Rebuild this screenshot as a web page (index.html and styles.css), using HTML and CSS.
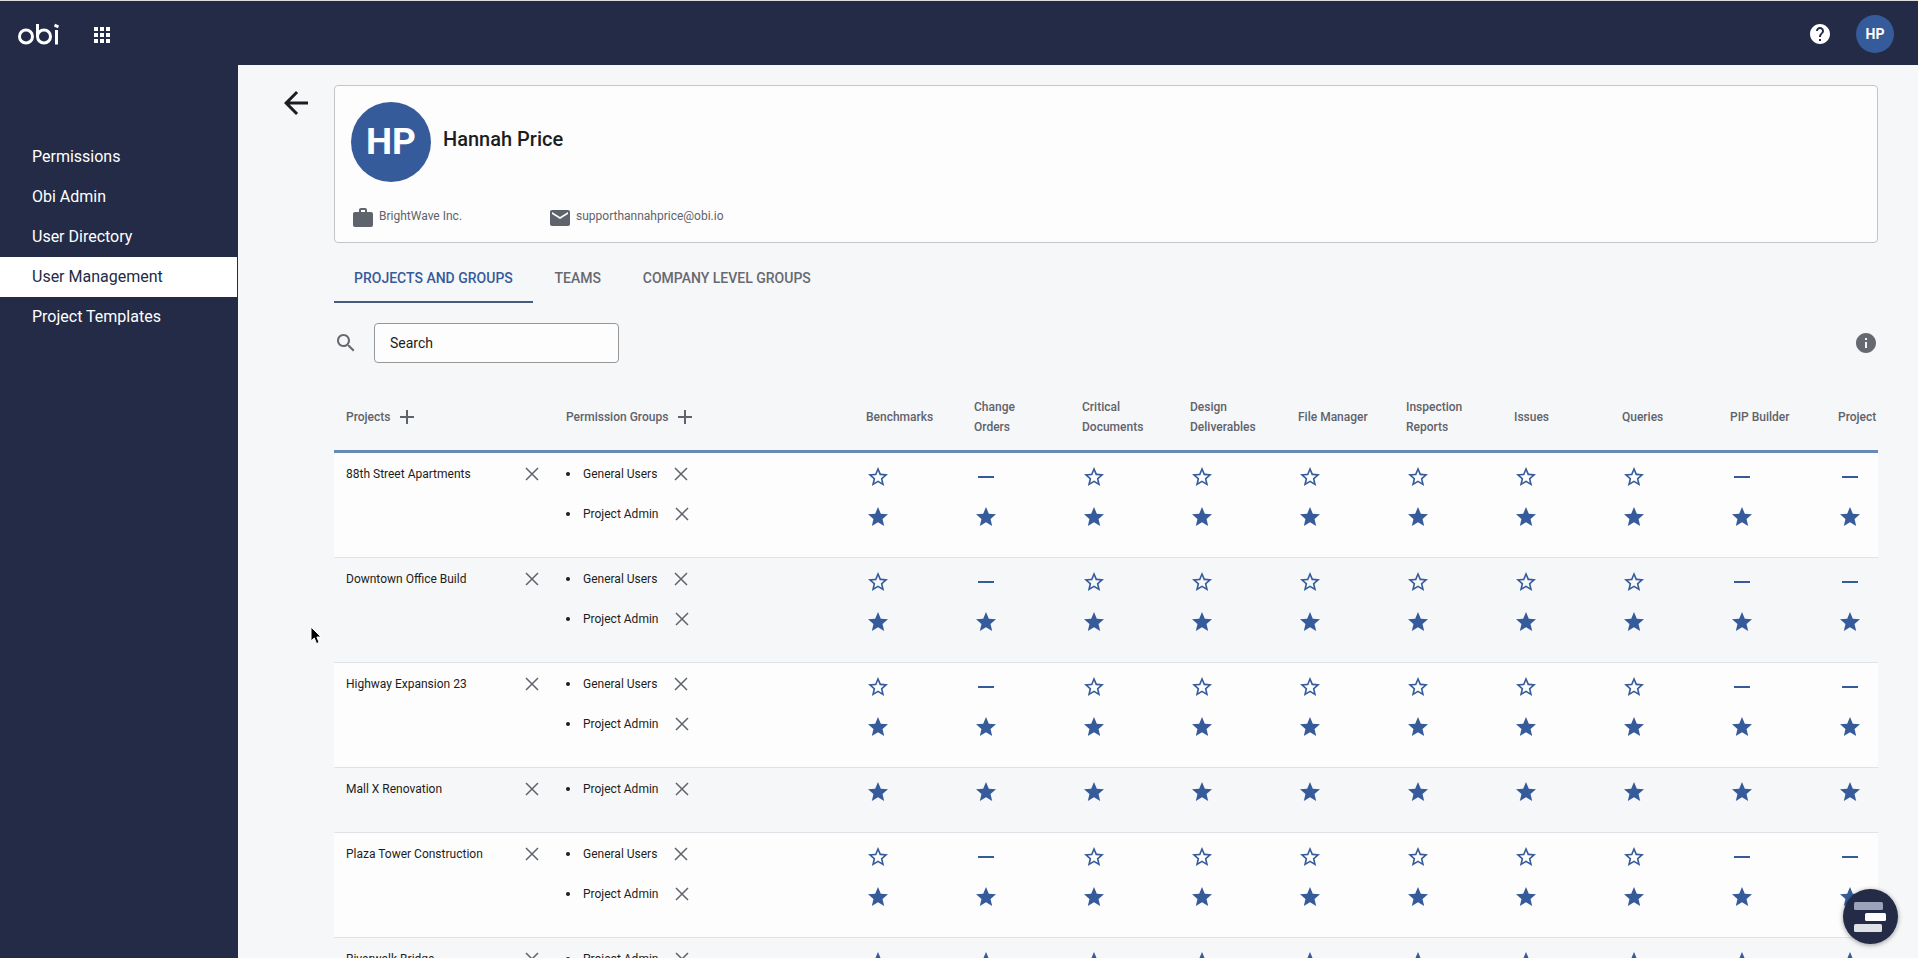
FILE: index.html
```html
<!DOCTYPE html>
<html lang="en">
<head>
    <meta charset="utf-8">
    <title>Obi - User Management</title>
    <meta name="viewport" content="width=device-width, initial-scale=1.0">
    <link rel="stylesheet" href="styles.css">
</head>
<body>
    <!-- icon sprites -->
    <svg class="sprites" aria-hidden="true">
        <symbol id="star" viewBox="0 0 24 24"><path d="M12 17.27 18.18 21l-1.64-7.03L22 9.24l-7.19-.61L12 2 9.19 8.63 2 9.24l5.46 4.73L5.82 21z"/></symbol>
        <symbol id="star-empty" viewBox="0 0 24 24"><path d="M22 9.24l-7.19-.62L12 2 9.19 8.63 2 9.24l5.46 4.73L5.82 21 12 17.27 18.18 21l-1.63-7.03L22 9.24zM12 15.4l-3.76 2.27 1-4.28-3.32-2.88 4.38-.38L12 6.1l1.71 4.04 4.38.38-3.32 2.88 1 4.28L12 15.4z"/></symbol>
        <symbol id="dash" viewBox="0 0 24 24"><path d="M4 11h16v2H4z"/></symbol>
        <symbol id="close" viewBox="0 0 24 24"><path d="M6 6l12 12M18 6 6 18" fill="none" stroke="currentColor" stroke-width="1.5"/></symbol>
        <symbol id="plus" viewBox="0 0 24 24"><path d="M19 13h-6v6h-2v-6H5v-2h6V5h2v6h6v2z"/></symbol>
    </svg>

    <header class="topbar">
        <a href="#" class="logo" aria-label="obi">
            <svg width="42" height="24" viewBox="0 0 42 24" stroke="#fff" stroke-width="3">
                <circle cx="9" cy="13.500" r="6.500"/>
                <path d="M20.500 1v12.500"/>
                <circle cx="27" cy="13.500" r="6.500"/>
                <path d="M39.500 7v14.500"/>
                <path d="M37.500 2.200l4 1.600"/>
            </svg>
        </a>
        <button class="icon-btn" aria-label="Apps">
            <svg width="24" height="24" viewBox="0 0 24 24"><path d="M4 8h4V4H4v4zm6 12h4v-4h-4v4zm-6 0h4v-4H4v4zm0-6h4v-4H4v4zm6 0h4v-4h-4v4zm6-10v4h4V4h-4zm-6 4h4V4h-4v4zm6 6h4v-4h-4v4zm0 6h4v-4h-4v4z"/></svg>
        </button>
        <div class="topbar-right">
            <button class="icon-btn" aria-label="Help">
                <svg width="24" height="24" viewBox="0 0 24 24"><path d="M12 2C6.480 2 2 6.480 2 12s4.480 10 10 10 10-4.480 10-10S17.520 2 12 2zm1 17h-2v-2h2v2zm2.070-7.750l-.9.920C13.450 12.900 13 13.500 13 15h-2v-.5c0-1.100.450-2.100 1.170-2.830l1.240-1.260c.370-.360.590-.860.590-1.410 0-1.100-.9-2-2-2s-2 .9-2 2H8c0-2.210 1.790-4 4-4s4 1.790 4 4c0 .880-.360 1.680-.930 2.250z"/></svg>
            </button>
            <button class="avatar avatar-small">HP</button>
        </div>
    </header>

    <div class="layout">
        <nav class="sidebar">
            <a href="#">Permissions</a>
            <a href="#">Obi Admin</a>
            <a href="#">User Directory</a>
            <a href="#" class="active">User Management</a>
            <a href="#">Project Templates</a>
        </nav>

        <main class="main">
            <button class="back-btn" aria-label="Back">
                <svg width="36" height="36" viewBox="0 0 24 24"><path d="M20 11H7.830l5.590-5.590L12 4l-8 8 8 8 1.410-1.410L7.830 13H20v-2z"/></svg>
            </button>

            <div class="content">
                <section class="card">
                    <div class="person">
                        <div class="avatar avatar-big">HP</div>
                        <h1>Hannah Price</h1>
                    </div>
                    <div class="details">
                        <div class="detail">
                            <svg width="24" height="24" viewBox="0 0 24 24"><path d="M20 6h-4V4c0-1.110-.890-2-2-2h-4c-1.110 0-2 .890-2 2v2H4c-1.110 0-2 .890-2 2v11c0 1.110.890 2 2 2h16c1.110 0 2-.890 2-2V8c0-1.110-.890-2-2-2zm-6 0h-4V4h4v2z"/></svg>
                            <span>BrightWave Inc.</span>
                        </div>
                        <div class="detail">
                            <svg width="24" height="24" viewBox="0 0 24 24"><path d="M20 4H4c-1.100 0-2 .9-2 2v12c0 1.100.9 2 2 2h16c1.100 0 2-.9 2-2V6c0-1.100-.9-2-2-2zm0 4l-8 5-8-5V6l8 5 8-5v2z"/></svg>
                            <span>supporthannahprice@obi.io</span>
                        </div>
                    </div>
                </section>

                <div class="tabs" role="tablist">
                    <button class="tab selected" role="tab" aria-selected="true">PROJECTS AND GROUPS</button>
                    <button class="tab" role="tab">TEAMS</button>
                    <button class="tab" role="tab">COMPANY LEVEL GROUPS</button>
                </div>

                <div class="search-row">
                    <label for="search" aria-label="Search">
                        <svg width="24" height="24" viewBox="0 0 24 24"><path d="M15.500 14h-.790l-.280-.270C15.410 12.590 16 11.110 16 9.500 16 5.910 13.090 3 9.500 3S3 5.910 3 9.500 5.910 16 9.500 16c1.610 0 3.090-.590 4.230-1.570l.270.280v.790l5 4.990L20.490 19l-4.990-5zm-6 0C7.010 14 5 11.990 5 9.500S7.010 5 9.500 5 14 7.010 14 9.500 11.990 14 9.500 14z"/></svg>
                    </label>
                    <input type="text" id="search" placeholder="Search">
                    <button class="info-btn" aria-label="Info">
                        <svg width="24" height="24" viewBox="0 0 24 24"><path d="M12 2C6.480 2 2 6.480 2 12s4.480 10 10 10 10-4.480 10-10S17.520 2 12 2zm1 15h-2v-6h2v6zm0-8h-2V7h2v2z"/></svg>
                    </button>
                </div>

                <div class="table-wrap">
                    <table>
                        <thead>
                            <tr>
                                <th class="col-project"><span class="head">Projects <button aria-label="Add project"><svg width="24" height="24"><use href="#plus"/></svg></button></span></th>
                                <th class="col-groups"><span class="head">Permission Groups <button aria-label="Add group"><svg width="24" height="24"><use href="#plus"/></svg></button></span></th>
                                <th>Benchmarks</th>
                                <th>Change<br>Orders</th>
                                <th>Critical<br>Documents</th>
                                <th>Design<br>Deliverables</th>
                                <th>File Manager</th>
                                <th>Inspection<br>Reports</th>
                                <th>Issues</th>
                                <th>Queries</th>
                                <th>PIP Builder</th>
                                <th>Project</th>
                            </tr>
                        </thead>
                        <tbody id="rows"></tbody>
                    </table>
                </div>
            </div>
        </main>
    </div>

    <button class="chat-btn" aria-label="Open widget">
        <svg width="55" height="55" viewBox="0 0 55 55">
            <rect x="11" y="13" width="29" height="8" rx="1.500" fill="#9aa3b9"/>
            <rect x="22" y="24" width="21" height="8" rx="1.500" fill="#fff"/>
            <rect x="11" y="35" width="28" height="8" rx="1.500" fill="#dfe1e6"/>
        </svg>
    </button>

    <svg class="cursor" width="14" height="20" viewBox="0 0 14 20"><path d="M1 1v14l3.300-3 2.200 5.500 2.600-1L6.900 11H11z" fill="#000" stroke="#fff"/></svg>

    <script src="script.js"></script>
</body>
</html>
```
FILE: styles.css
```css
* {
    box-sizing: border-box;
}
body {
    margin: 0;
    height: 100vh;
    display: flex;
    flex-direction: column;
    overflow: hidden;
    font-family: Roboto, sans-serif;
    font-size: 12px;
    line-height: 20px;
    color: #1c1d21;
    background-color: #f6f7f9;
}
button {
    font-family: inherit;
    padding: 0;
    border: none;
    background: none;
    color: inherit;
    cursor: pointer;
}
svg {
    display: block;
    fill: currentColor;
}
.sprites {
    position: absolute;
    width: 0;
    height: 0;
}

/* top bar */
.topbar {
    flex: none;
    display: flex;
    align-items: center;
    height: 65px;
    padding: 4px 24px 0 17px;
    border-top: 1px solid #dcdedd;
    background-color: #232b47;
    color: #fff;
}
.logo {
    margin-right: 31px;
}
.logo svg {
    fill: none;
}
.topbar-right {
    display: flex;
    align-items: center;
    gap: 24px;
    margin-left: auto;
    padding-bottom: 2px;
}
.avatar {
    display: flex;
    align-items: center;
    justify-content: center;
    border-radius: 50%;
    background-color: #365b9a;
    color: #fff;
    font-weight: 700;
}
.avatar-small {
    width: 38px;
    height: 38px;
    font-size: 14px;
}
.avatar-big {
    width: 80px;
    height: 80px;
    font-size: 37px;
}

/* sidebar */
.layout {
    flex: 1;
    display: flex;
    min-height: 0;
}
.sidebar {
    flex: none;
    width: 238px;
    padding-top: 72px;
    border-right: 1px solid #232b47;
    background-color: #232b47;
}
.sidebar a {
    display: block;
    padding: 0 32px;
    font-size: 16px;
    line-height: 40px;
    color: #fff;
    text-decoration: none;
}
.sidebar .active {
    background-color: #fff;
    color: #232b47;
}

/* main */
.main {
    flex: 1;
    display: flex;
    align-items: flex-start;
    min-width: 0;
    padding: 20px 40px 0;
    overflow-y: auto;
    scrollbar-width: none;
}
.back-btn {
    flex: none;
    width: 56px;
}
.content {
    flex: 1;
    min-width: 0;
}
.card {
    padding: 16px 16px 12px;
    border: 1px solid #c4c5c6;
    border-radius: 4px;
    background-color: #fdfdfd;
}
.person {
    display: flex;
    align-items: center;
    gap: 12px;
}
h1 {
    margin: 0;
    padding-bottom: 6px;
    font-size: 20px;
    font-weight: 500;
}
.details {
    display: flex;
    margin-top: 24px;
}
.detail {
    display: flex;
    gap: 4px;
    width: 197px;
    color: #5f636b;
}

.tabs {
    display: flex;
    margin-top: 11px;
}
.tab {
    min-width: 90px;
    height: 49px;
    padding: 0 20px;
    border-bottom: 2px solid transparent;
    font-size: 14px;
    font-weight: 500;
    color: #66696f;
}
.tab.selected {
    color: #365b9a;
    border-color: #465a7f;
}

.search-row {
    display: flex;
    align-items: center;
    margin-top: 20px;
    color: #66696f;
}
.search-row input {
    width: 245px;
    height: 40px;
    margin-left: 16px;
    padding: 0 15px;
    border: 1px solid #97989a;
    border-radius: 4px;
    background-color: #fdfdfd;
    font-family: inherit;
    font-size: 14px;
}
.search-row input::placeholder {
    color: #1c1d21;
}
.info-btn {
    margin-left: auto;
}

/* permissions table */
.table-wrap {
    margin-top: 22px;
    overflow-x: auto;
    scrollbar-width: none;
}
table {
    width: 1600px;
    table-layout: fixed;
    border-collapse: separate;
    border-spacing: 0;
}
th {
    height: 68px;
    padding: 0 12px 2px;
    border-bottom: 3px solid #6a89b5;
    text-align: left;
    font-weight: 500;
    color: #5f636b;
}
.col-project {
    width: 220px;
}
.col-groups {
    width: 300px;
}
.head {
    display: flex;
    align-items: center;
    gap: 5px;
}
td {
    padding: 12px;
    border-bottom: 1px solid #dfe2e6;
    vertical-align: top;
}
td:nth-child(-n+2) {
    padding-top: 11px;
}
tbody tr:nth-child(odd) {
    background-color: #fdfdfd;
}
.project {
    display: flex;
    justify-content: space-between;
}
.remove {
    display: flex;
    align-items: center;
    justify-content: center;
    width: 20px;
    height: 20px;
    color: #5f636b;
}
.remove svg {
    flex: none;
}
.groups {
    margin: 0;
    padding: 0;
    list-style: none;
}
.groups li {
    display: flex;
    align-items: center;
    margin-bottom: 20px;
}
.groups li::before {
    content: "";
    width: 4px;
    height: 4px;
    margin-right: 13px;
    border-radius: 50%;
    background-color: #1c1d21;
}
.groups .remove {
    margin-left: 14px;
}
.level {
    margin-bottom: 16px;
    color: #365b9a;
}

/* floating widget button */
.chat-btn {
    position: fixed;
    right: 20px;
    bottom: 14px;
    border-radius: 50%;
    background-color: #232b47;
    box-shadow: 0 1px 5px rgba(0, 0, 0, 0.4);
}
.cursor {
    position: absolute;
    left: 310px;
    top: 626px;
}
```
FILE: script.js
```js
// access levels per permission group, one per column
const levels = {
    'General Users': ['star-empty', 'dash', 'star-empty', 'star-empty', 'star-empty', 'star-empty', 'star-empty', 'star-empty', 'dash', 'dash'],
    'Project Admin': Array(10).fill('star')
};

const projects = [
    { name: '88th Street Apartments', groups: ['General Users', 'Project Admin'] },
    { name: 'Downtown Office Build', groups: ['General Users', 'Project Admin'] },
    { name: 'Highway Expansion 23', groups: ['General Users', 'Project Admin'] },
    { name: 'Mall X Renovation', groups: ['Project Admin'] },
    { name: 'Plaza Tower Construction', groups: ['General Users', 'Project Admin'] },
    { name: 'Riverwalk Bridge', groups: ['Project Admin'] }
];

function removeButton(name) {
    return `<button class="remove" aria-label="Remove ${name}"><svg width="24" height="24"><use href="#close"/></svg></button>`;
}

function levelCell(groups, column) {
    const icons = groups.map(g => `<svg class="level" width="24" height="24"><use href="#${levels[g][column]}"/></svg>`);
    return `<td>${icons.join('')}</td>`;
}

document.getElementById('rows').innerHTML = projects.map(p => `
    <tr>
        <td><div class="project">${p.name} ${removeButton(p.name)}</div></td>
        <td><ul class="groups">${p.groups.map(g => `<li>${g} ${removeButton(g)}</li>`).join('')}</ul></td>
        ${levels['Project Admin'].map((_, i) => levelCell(p.groups, i)).join('')}
    </tr>`).join('');
```
